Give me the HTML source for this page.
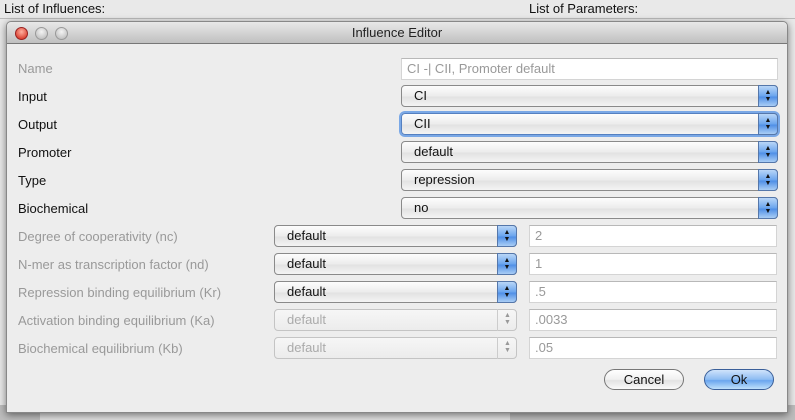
<!DOCTYPE html><html><head><style>
*{box-sizing:border-box;margin:0;padding:0}
body{width:795px;height:420px;overflow:hidden;background:#e9e9e9;font-family:"Liberation Sans",sans-serif;font-size:13px;position:relative}
.a{position:absolute}
.win{left:6px;top:21px;width:782px;height:392px;background:#ededed;border:1px solid #888;border-radius:5px 5px 0 0;box-shadow:0 2px 8px rgba(0,0,0,.5)}
.title{left:0;top:0;width:780px;height:22px;background:linear-gradient(#e8e8e8,#c0c0c0);border-bottom:1px solid #777;border-radius:5px 5px 0 0;text-align:center;line-height:22px;color:#222}
.dot{width:13px;height:13px;border-radius:50%;top:5px;background:radial-gradient(circle at 50% 35%,#f4f4f4,#b4b4b4);border:1px solid #999}
.lbl{left:18px;height:22px;line-height:22px;color:#111}
.dis{color:#999}
.cb{height:22px;border:1px solid #8a8a8a;border-radius:4px;background:linear-gradient(#fdfdfd,#ececec 50%,#e2e2e2 55%,#f4f4f4);line-height:20px;padding-left:12px;color:#111}
.cb .ar{position:absolute;right:-1px;top:-1px;width:20px;height:22px;border-radius:0 4px 4px 0;background:linear-gradient(#b9d6f7,#6aa5ee 50%,#4f8fe6 55%,#a9cdf5);border:1px solid #5577aa;font-size:7px;line-height:7px;text-align:center;padding-top:3px;color:#111}
.cb.d{border-color:#c4c4c4;color:#aaa;background:linear-gradient(#f6f6f6,#ececec)}
.cb.d .ar{background:none;border:none;border-left:1px solid #ccc;color:#999}
.tf{height:22px;background:#fff;border:1px solid #d4d4d4;border-top-color:#b8b8b8;line-height:20px;padding-left:5px;color:#999}
.btn{height:21px;border:1px solid #777;border-radius:11px;background:linear-gradient(#fff,#f0f0f0 50%,#e2e2e2 55%,#fafafa);text-align:center;line-height:19px;color:#111}
</style></head><body>
<div class="a" style="left:4px;top:1px;color:#111">List of Influences:</div>
<div class="a" style="left:529px;top:1px;color:#111">List of Parameters:</div>
<div class="a" style="left:0;top:18px;width:795px;height:1px;background:#bbb"></div>
<div class="a" style="left:0;top:405px;width:795px;height:15px;background:#bdbdbd"></div>
<div class="a" style="left:40px;top:410px;width:470px;height:10px;background:#e0e0e0"></div>
<div class="a win">
<div class="a title">Influence Editor</div>
<div class="a dot" style="left:8px;background:radial-gradient(circle at 50% 35%,#ffb0a0,#d02010);border-color:#922"></div>
<div class="a dot" style="left:28px"></div>
<div class="a dot" style="left:48px"></div>
</div>
<div class="a lbl dis" style="top:58px">Name</div>
<div class="a lbl" style="top:86px">Input</div>
<div class="a lbl" style="top:114px">Output</div>
<div class="a lbl" style="top:142px">Promoter</div>
<div class="a lbl" style="top:170px">Type</div>
<div class="a lbl" style="top:198px">Biochemical</div>
<div class="a lbl dis" style="top:226px">Degree of cooperativity (nc)</div>
<div class="a lbl dis" style="top:254px">N-mer as transcription factor (nd)</div>
<div class="a lbl dis" style="top:282px">Repression binding equilibrium (Kr)</div>
<div class="a lbl dis" style="top:310px">Activation binding equilibrium (Ka)</div>
<div class="a lbl dis" style="top:338px">Biochemical equilibrium (Kb)</div>

<div class="a tf" style="left:401px;top:58px;width:377px">CI -| CII, Promoter default</div>
<div class="a cb" style="left:401px;top:85px;width:377px">CI<div class="ar">▲<br>▼</div></div>
<div class="a cb" style="left:401px;top:113px;width:377px;box-shadow:0 0 0 2px #7aa8e6;border-color:#5580c0">CII<div class="ar">▲<br>▼</div></div>
<div class="a cb" style="left:401px;top:141px;width:377px">default<div class="ar">▲<br>▼</div></div>
<div class="a cb" style="left:401px;top:169px;width:377px">repression<div class="ar">▲<br>▼</div></div>
<div class="a cb" style="left:401px;top:197px;width:377px">no<div class="ar">▲<br>▼</div></div>

<div class="a cb" style="left:274px;top:225px;width:243px">default<div class="ar">▲<br>▼</div></div>
<div class="a cb" style="left:274px;top:253px;width:243px">default<div class="ar">▲<br>▼</div></div>
<div class="a cb" style="left:274px;top:281px;width:243px">default<div class="ar">▲<br>▼</div></div>
<div class="a cb d" style="left:274px;top:309px;width:243px">default<div class="ar">▲<br>▼</div></div>
<div class="a cb d" style="left:274px;top:337px;width:243px">default<div class="ar">▲<br>▼</div></div>

<div class="a tf" style="left:529px;top:225px;width:248px">2</div>
<div class="a tf" style="left:529px;top:253px;width:248px">1</div>
<div class="a tf" style="left:529px;top:281px;width:248px">.5</div>
<div class="a tf" style="left:529px;top:309px;width:248px">.0033</div>
<div class="a tf" style="left:529px;top:337px;width:248px">.05</div>

<div class="a btn" style="left:604px;top:369px;width:80px">Cancel</div>
<div class="a btn" style="left:704px;top:369px;width:70px;border-color:#3a5f99;background:linear-gradient(#cfe3fb,#8dbcf2 50%,#6aa5ee 55%,#bfe0fb)">Ok</div>
</body></html>
